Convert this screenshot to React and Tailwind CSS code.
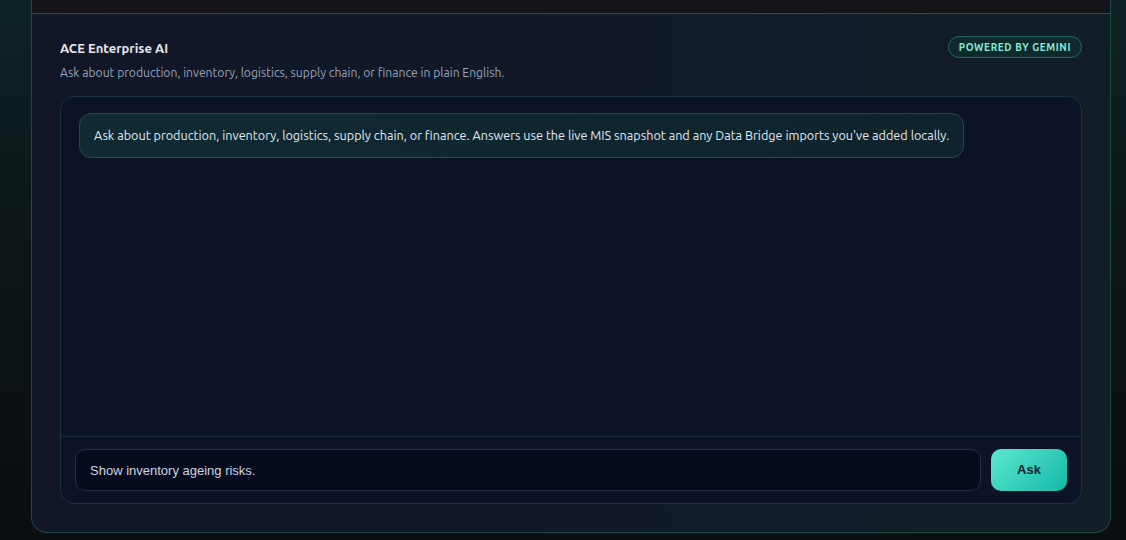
export default function App() {
  return (
    <div
      className="w-full h-[540px] overflow-hidden bg-[linear-gradient(180deg,#0e2325_0%,#0d1618_45%,#0a0d11_100%)]"
      style={{ fontFamily: '"Ubuntu", "Noto Sans", sans-serif' }}
    >
      <div className="ml-[31px] w-[1080px] h-[533px] flex flex-col rounded-b-2xl border border-t-0 border-[#1d4a47] bg-[linear-gradient(90deg,#111727_0%,#111a27_60%,#121e27_100%)] overflow-hidden">
        <div className="h-[14px] shrink-0 bg-[#151519] border-b border-[#1f5551]" />

        <div className="flex-1 flex flex-col px-[28px] pt-[24px] pb-[28px]">
          <div className="flex items-start justify-between">
            <div>
              <h2 className="text-[13px] leading-5 font-bold text-[#e5e7eb]">ACE Enterprise AI</h2>
              <p className="mt-[7px] text-[12.15px] leading-4 text-[#94a3b8]">
                Ask about production, inventory, logistics, supply chain, or finance in plain English.
              </p>
            </div>
            <span className="mt-[-2px] h-[22px] px-[10px] flex items-center rounded-full border border-[#23665e] bg-[#0f2a2c] text-[10px] font-bold tracking-[0.06em] text-[#86eadb]">
              POWERED BY GEMINI
            </span>
          </div>

          <div className="mt-[15px] flex-1 flex flex-col rounded-[14px] border border-[#19333a] bg-[#0d1326] overflow-hidden">
            <div className="flex-1 px-[18px] pt-[16px]">
              <div className="inline-block rounded-[12px] border border-[#1f4d50] bg-[linear-gradient(90deg,#112a32,#0f232d)] px-[14px] py-[12px] text-[12.65px] leading-[19px] text-[#e2e8f0]">
                Ask about production, inventory, logistics, supply chain, or finance. Answers use the live MIS snapshot and any Data Bridge imports you've added locally.
              </div>
            </div>

            <div className="border-t border-[#1d2a39] px-[14px] pt-[12px] pb-[12px] flex gap-[10px]">
              <input
                defaultValue="Show inventory ageing risks."
                className="flex-1 h-[42px] rounded-[10px] border border-[#272e3f] bg-[#060b1e] px-[14px] text-[13px] text-[#cbd5e1] outline-none"
                style={{ fontFamily: '"Liberation Sans", Arial, sans-serif' }}
              />
              <button
                className="w-[76px] h-[42px] rounded-[10px] bg-[linear-gradient(135deg,#5ce8d2,#14b8a6)] text-[13px] font-bold text-[#0f1f2a]"
                style={{ fontFamily: '"Liberation Sans", Arial, sans-serif' }}
              >
                Ask
              </button>
            </div>
          </div>
        </div>
      </div>
    </div>
  )
}
